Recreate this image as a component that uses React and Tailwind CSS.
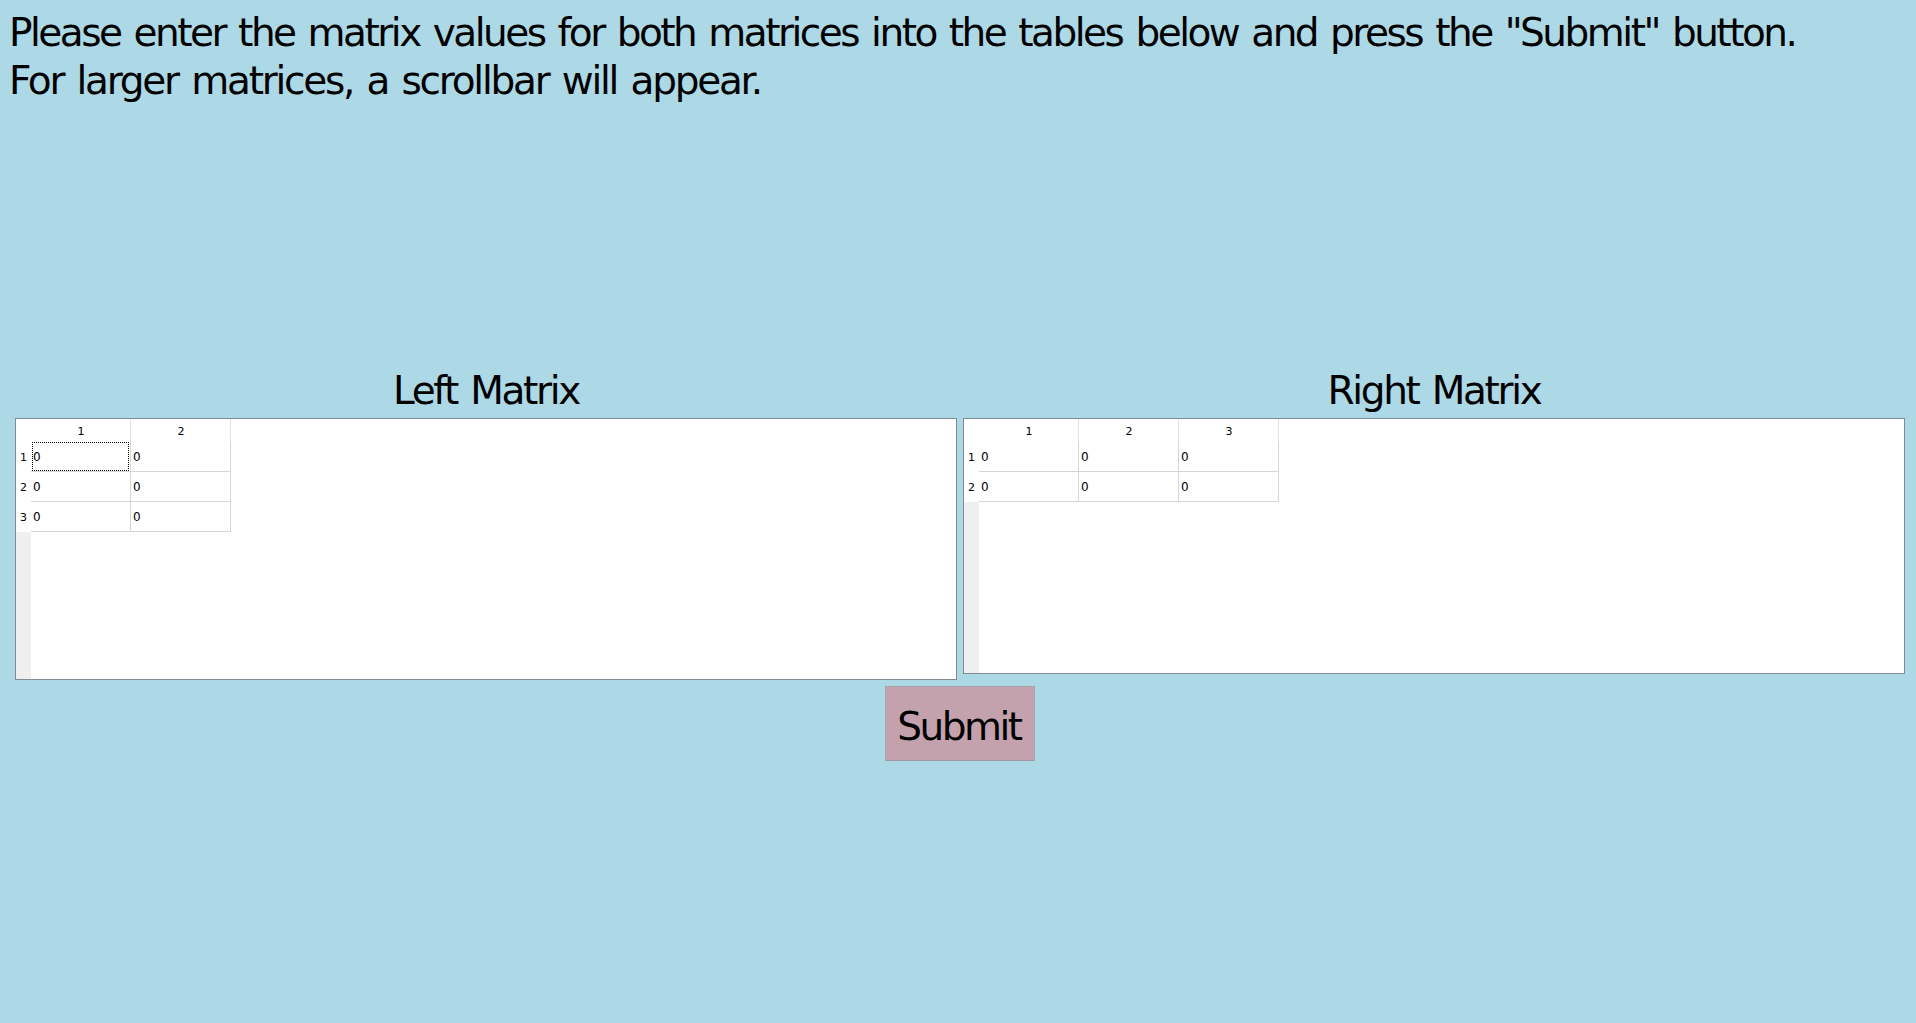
const font = "font-['DejaVu_Sans',sans-serif]";
const big = "text-[39px] tracking-[-2.5px] [word-spacing:3.2px]";

function Matrix({ title, rows, cols, boxH, focus }) {
  return (
    <div className="flex flex-col w-[942px]">
      <div className="h-[52px] pb-[2px] flex items-center justify-center text-black text-[39px] tracking-[-2.35px] [word-spacing:3.2px]">{title}</div>
      <div className={`flex border border-[#808b93] bg-white ${boxH}`}>
        <div className="flex flex-col w-[15px] shrink-0">
          <div className="h-[23px] bg-white" />
          {Array.from({ length: rows }, (_, r) => (
            <div key={r} className="h-[30px] flex items-center justify-end pr-[4px] pt-[2px] text-[11px] text-black bg-white">{r + 1}</div>
          ))}
          <div className="flex-1 bg-[#efefef]" />
        </div>
        <div className="flex flex-col items-start">
          <div className="flex h-[23px]">
            {Array.from({ length: cols }, (_, c) => (
              <div key={c} className="w-[100px] flex items-center justify-center pl-[1px] pt-[3px] text-[11px] text-black border-r border-[#e3e3e3]">{c + 1}</div>
            ))}
          </div>
          {Array.from({ length: rows }, (_, r) => (
            <div key={r} className="flex h-[30px]">
              {Array.from({ length: cols }, (_, c) => (
                <div key={c} className="relative w-[100px] flex items-center pl-[2px] pt-[1px] text-[12px] text-black border-r border-b border-[#d6d6d6]">
                  0
                  {focus && r === 0 && c === 0 && (
                    <div className="absolute left-[1px] top-[0px] w-[97px] h-[29px] border border-dotted border-black rounded-[1px]" />
                  )}
                </div>
              ))}
            </div>
          ))}
        </div>
      </div>
    </div>
  );
}

export default function App() {
  return (
    <div className={`${font} w-[1916px] h-[1023px] overflow-hidden bg-[#add8e6] text-black`}>
      <div className="pl-[9px] pt-[9px] h-[366px] text-[39px] leading-[48px] whitespace-nowrap">
        <div className="tracking-[-2.5px] [word-spacing:3.1px]">Please enter the matrix values for both matrices into the tables below and press the "Submit" button.</div>
        <div className="tracking-[-2.25px] [word-spacing:3.2px]">For larger matrices, a scrollbar will appear.</div>
      </div>
      <div className="flex items-start gap-[6px] pl-[15px]">
        <Matrix title="Left Matrix" rows={3} cols={2} boxH="h-[262px]" focus />
        <Matrix title="Right Matrix" rows={2} cols={3} boxH="h-[256px]" />
      </div>
      <div className="flex justify-center pt-[6px] pl-[4px]">
        <button className={`w-[150px] h-[75px] bg-[#c3a2ad] border border-[#a9a0ab] border-b-[#9a9aa6] pt-[8px] pr-[2px] text-black ${big}`}>Submit</button>
      </div>
    </div>
  );
}
